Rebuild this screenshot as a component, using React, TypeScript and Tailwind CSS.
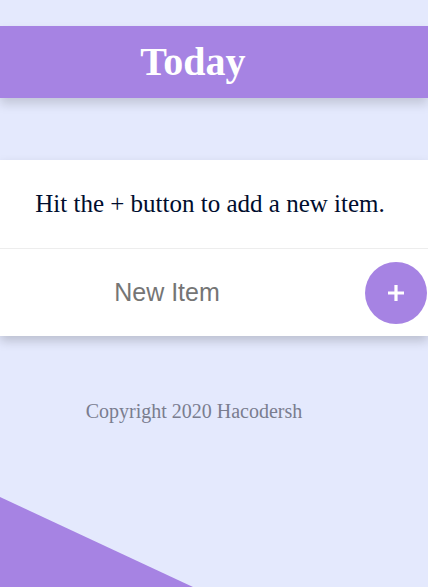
export default function App() {
  return (
    <div className="relative min-h-[587px] w-full overflow-hidden bg-[#e4e9fd] pt-[26px] font-['Liberation_Serif',serif]">
      <header className="relative z-10 flex h-[72px] w-full items-center bg-[#a683e3] shadow-[0_6px_10px_rgba(0,0,0,0.15)]">
        <h1 className="w-[386px] text-center text-[40px] font-bold text-white">Today</h1>
      </header>

      <section className="relative z-10 mt-[62px] w-full bg-white shadow-[0_5px_10px_rgba(0,0,0,0.18)]">
        <div className="flex h-[88px] items-center">
          <p className="w-[420px] text-center text-[25px] text-[#000d2e]">
            Hit the + button to add a new item.
          </p>
        </div>
        <div className="flex h-[88px] items-center border-t border-[#ededed]">
          <input
            type="text"
            placeholder="New Item"
            className="w-[334px] bg-transparent text-center font-['Liberation_Sans',Arial,sans-serif] text-[25px] text-[#757575] outline-none placeholder:text-[#757575]"
          />
          <button className="ml-[31px] flex h-[62px] w-[62px] items-center justify-center rounded-full bg-[#a683e3] text-white">
            <svg width="18" height="18" viewBox="0 0 18 18">
              <path d="M9 1v16M1 9h16" stroke="white" strokeWidth="3.2" />
            </svg>
          </button>
        </div>
      </section>

      <footer className="mt-[60px] w-[388px] text-center text-[20px] text-[#7a7d8f]">
        Copyright 2020 Hacodersh
      </footer>

      <svg className="absolute bottom-0 left-0" width="193" height="90" viewBox="0 0 193 90">
        <polygon points="0,0 193,90 0,90" fill="#a683e3" />
      </svg>
    </div>
  );
}
